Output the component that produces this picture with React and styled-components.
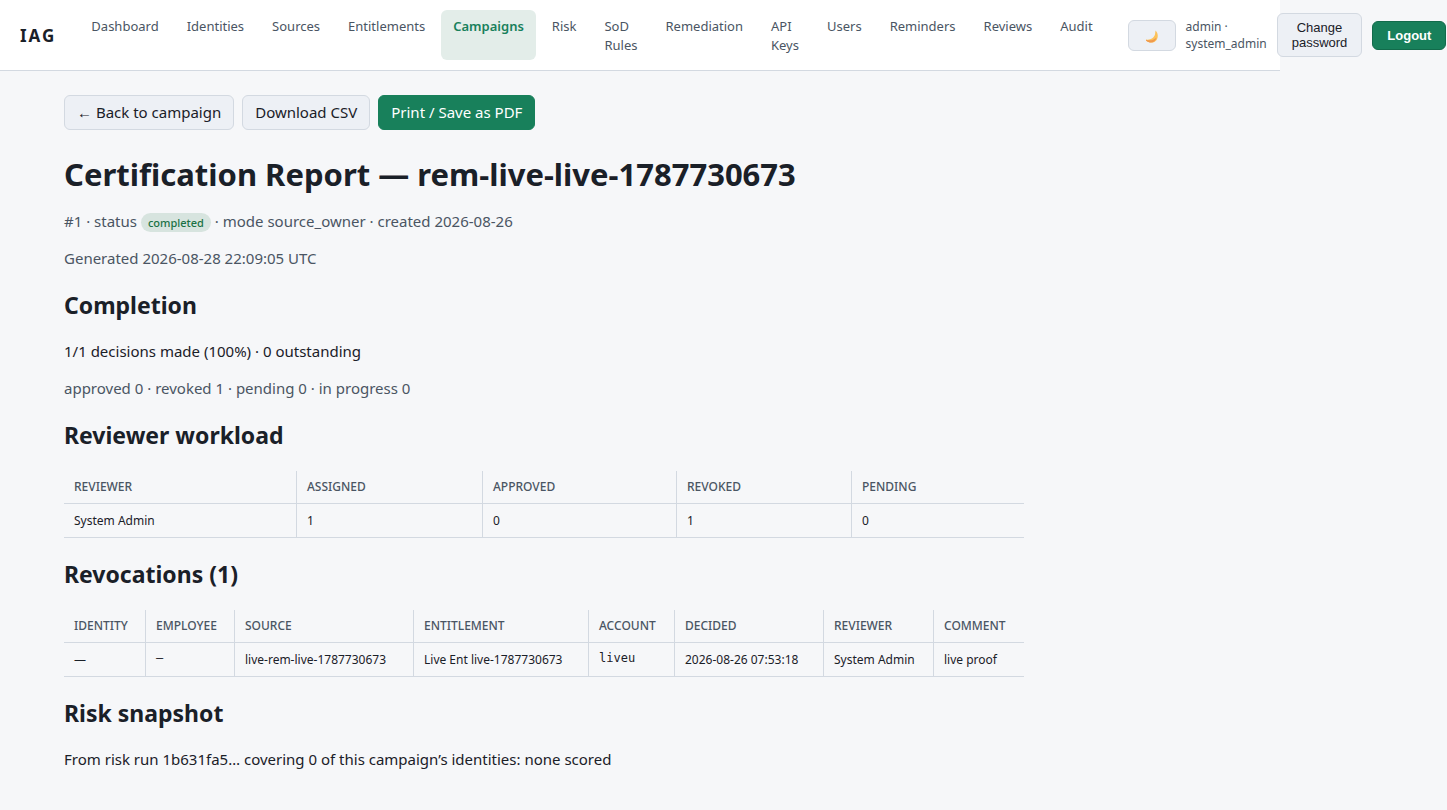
import React from "react";
import styled, { createGlobalStyle, css } from "styled-components";

const Global = createGlobalStyle`
  *, *::before, *::after { box-sizing: border-box; }
  html { background: #f6f7f9; }
  body {
    margin: 0;
    color: #1a2028;
    background: #f6f7f9;
    font: 15px/21px "Segoe UI", "Noto Sans", sans-serif;
  }
`;

const Header = styled.header`
  display: flex;
  align-items: center;
  gap: 23px;
  max-width: 1280px;
  padding: 10px 20px;
  background: #fff;
  border-bottom: 1px solid #d3d9e1;
`;

const Brand = styled.div`
  flex: none;
  font-size: 17px;
  font-weight: 700;
  letter-spacing: 2px;
`;

const Nav = styled.nav`
  display: flex;
  flex: none;
  gap: 4px;
`;

const NavLink = styled.a`
  padding: 7px 12px 5px;
  border-radius: 6px;
  color: ${(p) => (p.$active ? "#18805b" : "#4a5563")};
  background: ${(p) => (p.$active ? "#e3ede9" : "transparent")};
  font-size: 13px;
  font-weight: ${(p) => (p.$active ? 600 : 400)};
  line-height: 19px;
  text-decoration: none;
  white-space: pre-line;
`;

const Account = styled.div`
  display: flex;
  flex: none;
  align-items: center;
  gap: 10px;
`;

const UserName = styled.span`
  color: #4a5563;
  font-size: 12px;
  line-height: 17px;
  white-space: pre-line;
`;

const surface = css`
  border: 1px solid ${(p) => (p.$primary ? "#126b4b" : "#d3d9e1")};
  border-radius: 6px;
  color: ${(p) => (p.$primary ? "#fff" : "#1a2028")};
  background: ${(p) => (p.$primary ? "#18805b" : "#edf0f5")};
`;

const HeaderButton = styled.button`
  ${surface}
  padding: 6px 14px;
  font: ${(p) => (p.$primary ? 700 : 400)} 13px/15px "Liberation Sans", Arial, sans-serif;
  white-space: pre-line;
  cursor: pointer;
`;

const ThemeButton = styled(HeaderButton)`
  display: flex;
  justify-content: center;
  width: 48px;
  padding: 8px 0 6px;
`;

const Main = styled.main`
  max-width: 1088px;
  padding: 24px 64px;
`;

const Actions = styled.div`
  display: flex;
  gap: 8px;
  margin-bottom: 24px;
`;

const action = css`
  ${surface}
  padding: 6px 12px;
  border-color: ${(p) => (p.$primary ? "#18805b" : "#d3d9e1")};
  font: inherit;
  text-decoration: none;
  cursor: pointer;
`;
const ActionLink = styled.a`${action}`;
const ActionButton = styled.button`${action}`;

const Title = styled.h1`
  margin: 0 0 16px;
  font-size: 31px;
  line-height: 41px;
`;

const Heading = styled.h2`
  margin: 20px 0;
  font-size: 23px;
  line-height: 32px;
`;

const Text = styled.p`
  margin: 16px 0;
  color: ${(p) => (p.$muted ? "#4a5563" : "inherit")};
`;

const Badge = styled.span`
  display: inline-block;
  padding: 0 7px;
  border-radius: 10px;
  color: #1b7245;
  background: #d7e4df;
  font-size: 11px;
  font-weight: 500;
  line-height: 19px;
`;

const Table = styled.table`
  width: 100%;
  table-layout: fixed;
  border-collapse: separate;
  border-spacing: 0;
  font-size: 12px;
  line-height: 17px;
`;

const cell = css`
  padding: 8px 10px;
  border-bottom: 1px solid #d3d9e1;
  text-align: left;
  vertical-align: top;
  white-space: nowrap;
  &:not(:last-child) { border-right: 1px solid #d3d9e1; }
`;
const Th = styled.th`
  ${cell}
  color: #4a5563;
  font-weight: 500;
  line-height: 16px;
  text-transform: uppercase;
`;
const Td = styled.td`${cell}`;
const Code = styled.code`
  display: block;
  font: 12px/15px "DejaVu Sans Mono", monospace;
`;

const links = ["Dashboard", "Identities", "Sources", "Entitlements", "Campaigns", "Risk", "SoD\nRules",
  "Remediation", "API\nKeys", "Users", "Reminders", "Reviews", "Audit"];

const workload = {
  widths: [233, 186, 194, 175],
  head: ["Reviewer", "Assigned", "Approved", "Revoked", "Pending"],
  rows: [["System Admin", "1", "0", "1", "0"]],
};

const revocations = {
  widths: [82, 89, 179, 175, 86, 149, 110],
  head: ["Identity", "Employee", "Source", "Entitlement", "Account", "Decided", "Reviewer", "Comment"],
  rows: [["—", <Code>–</Code>, "live-rem-live-1787730673", "Live Ent live-1787730673", <Code>liveu</Code>,
    "2026-08-26 07:53:18", "System Admin", "live proof"]],
};

function DataTable({ data, label }) {
  return (
    <Table aria-label={label}>
      <colgroup>
        {data.widths.map((w, i) => <col key={i} width={w} />)}
        <col />
      </colgroup>
      <thead>
        <tr>{data.head.map((h) => <Th key={h} scope="col">{h}</Th>)}</tr>
      </thead>
      <tbody>
        {data.rows.map((row, r) => (
          <tr key={r}>{row.map((c, i) => <Td key={i}>{c}</Td>)}</tr>
        ))}
      </tbody>
    </Table>
  );
}

function Moon() {
  return (
    <svg width="15" height="15" viewBox="0 0 15 15" aria-hidden="true">
      <path d="M11.5 1.5C14 4 14.6 8 12.6 11C10.5 14 5.5 14.6 2 11.5V10.5C6 11.5 10 9 11 5.5Z" fill="#fcc25a" />
      <path d="M2 10.8C5.5 12 9.5 11.3 12.4 8.8C11.5 13.8 6 15.2 2 11.5Z" fill="#f0994c" />
    </svg>
  );
}

export default function App() {
  return (
    <>
      <Global />
      <Header>
        <Brand>IAG</Brand>
        <Nav aria-label="Main">
          {links.map((l) => (
            <NavLink key={l} href="#" $active={l === "Campaigns"}>{l}</NavLink>
          ))}
        </Nav>
        <Account>
          <ThemeButton type="button" aria-label="Toggle theme"><Moon /></ThemeButton>
          <UserName>{"admin ·\nsystem_admin"}</UserName>
          <HeaderButton type="button">{"Change\npassword"}</HeaderButton>
          <HeaderButton type="button" $primary>Logout</HeaderButton>
        </Account>
      </Header>
      <Main>
        <Actions>
          <ActionLink href="#">← Back to campaign</ActionLink>
          <ActionButton type="button">Download CSV</ActionButton>
          <ActionButton type="button" $primary>Print / Save as PDF</ActionButton>
        </Actions>
        <Title>Certification Report — rem-live-live-1787730673</Title>
        <Text $muted>#1 · status <Badge>completed</Badge> · mode source_owner · created 2026-08-26</Text>
        <Text $muted>Generated 2026-08-28 22:09:05 UTC</Text>
        <Heading>Completion</Heading>
        <Text>1/1 decisions made (100%) · 0 outstanding</Text>
        <Text $muted>approved 0 · revoked 1 · pending 0 · in progress 0</Text>
        <Heading>Reviewer workload</Heading>
        <DataTable data={workload} label="Reviewer workload" />
        <Heading>Revocations (1)</Heading>
        <DataTable data={revocations} label="Revocations" />
        <Heading>Risk snapshot</Heading>
        <Text>From risk run 1b631fa5… covering 0 of this campaign’s identities: none scored</Text>
      </Main>
    </>
  );
}
